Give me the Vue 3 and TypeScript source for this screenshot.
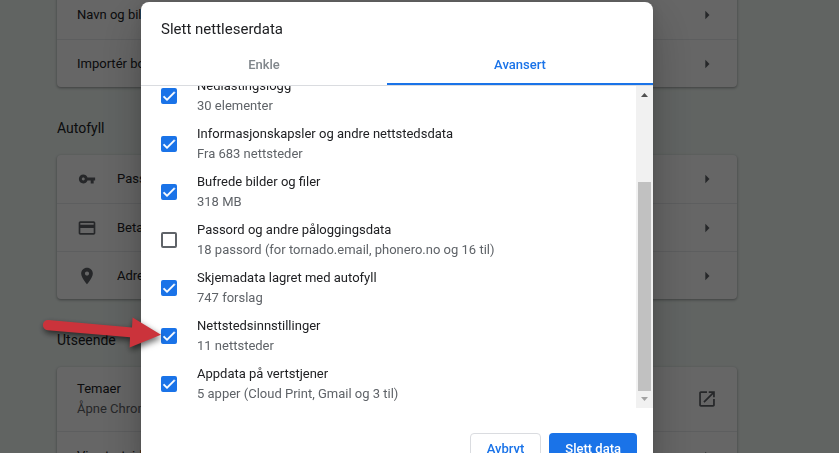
<script setup lang="ts">
import { ref } from 'vue'

interface Row { title: string; sub?: string; icon?: string; viewBox?: string; external?: boolean }
interface Section { heading?: string; rows: Row[] }
interface DataType { title: string; sub: string; checked: boolean }

const keyPath = 'M12.65 10C11.83 7.67 9.61 6 7 6c-3.31 0-6 2.69-6 6s2.69 6 6 6c2.61 0 4.83-1.67 5.65-4H17v4h4v-4h2v-4H12.65zM7 14c-1.1 0-2-.9-2-2s.9-2 2-2 2 .9 2 2-.9 2-2 2z'
const cardPath = 'M20 4H4c-1.11 0-1.99.89-1.99 2L2 18c0 1.11.89 2 2 2h16c1.11 0 2-.89 2-2V6c0-1.11-.89-2-2-2zm0 14H4v-6h16v6zm0-10H4V6h16v2z'
const pinPath = 'M12 2C8.13 2 5 5.13 5 9c0 5.25 7 13 7 13s7-7.75 7-13c0-3.87-3.13-7-7-7zm0 9.5c-1.38 0-2.5-1.12-2.5-2.5s1.12-2.5 2.5-2.5 2.5 1.12 2.5 2.5-1.12 2.5-2.5 2.5z'

const sections: Section[] = [
  { rows: [{ title: 'Navn og bilde' }, { title: 'Importér bokmerker og innstillinger' }] },
  {
    heading: 'Autofyll',
    rows: [
      { title: 'Passord', icon: keyPath, viewBox: '-1.5 -1.5 27 27' },
      { title: 'Betalingsmåter', icon: cardPath },
      { title: 'Adresser og mer', icon: pinPath },
    ],
  },
  {
    heading: 'Utseende',
    rows: [
      { title: 'Temaer', sub: 'Åpne Chrome Nettmarked', external: true },
      { title: 'Vis startsideknappen' },
    ],
  },
]

const tabs = ['Enkle', 'Avansert']
const activeTab = ref('Avansert')

const dataTypes = ref<DataType[]>([
  { title: 'Nedlastingslogg', sub: '30 elementer', checked: true },
  { title: 'Informasjonskapsler og andre nettstedsdata', sub: 'Fra 683 nettsteder', checked: true },
  { title: 'Bufrede bilder og filer', sub: '318 MB', checked: true },
  { title: 'Passord og andre påloggingsdata', sub: '18 passord (for tornado.email, phonero.no og 16 til)', checked: false },
  { title: 'Skjemadata lagret med autofyll', sub: '747 forslag', checked: true },
  { title: 'Nettstedsinnstillinger', sub: '11 nettsteder', checked: true },
  { title: 'Appdata på vertstjener', sub: '5 apper (Cloud Print, Gmail og 3 til)', checked: true },
])
</script>

<template>
  <div class="page">
    <main class="settings">
      <section v-for="(section, i) in sections" :key="i">
        <h2 v-if="section.heading" class="heading">{{ section.heading }}</h2>
        <div class="card">
          <button v-for="row in section.rows" :key="row.title" type="button" class="row" :class="{ tall: row.sub }">
            <svg v-if="row.icon" class="icon" :viewBox="row.viewBox ?? '0 0 24 24'" aria-hidden="true"><path :d="row.icon" /></svg>
            <span class="row-text">
              <span>{{ row.title }}</span>
              <span v-if="row.sub" class="sub">{{ row.sub }}</span>
            </span>
            <svg v-if="row.external" class="icon" viewBox="0.5 0.5 23 23" aria-hidden="true">
              <path d="M19 19H5V5h7V3H5c-1.11 0-2 .9-2 2v14c0 1.1.89 2 2 2h14c1.1 0 2-.9 2-2v-7h-2v7zM14 3v2h3.59l-9.83 9.83 1.41 1.41L19 6.41V10h2V3h-7z" />
            </svg>
            <svg v-else class="icon" viewBox="0 0 24 24" aria-hidden="true"><path d="M10 7l5 5-5 5z" /></svg>
          </button>
        </div>
      </section>
    </main>

    <div class="backdrop">
      <div class="dialog" role="dialog" aria-labelledby="dialog-title">
        <h1 id="dialog-title" class="title">Slett nettleserdata</h1>
        <div class="tabs" role="tablist">
          <button
            v-for="tab in tabs"
            :key="tab"
            type="button"
            role="tab"
            class="tab"
            :class="{ active: tab === activeTab }"
            :aria-selected="tab === activeTab"
            @click="activeTab = tab"
          >{{ tab }}</button>
        </div>
        <div class="body">
          <div class="list">
            <label v-for="(item, i) in dataTypes" :key="item.title" class="item" :for="`type-${i}`">
              <span class="check">
                <input :id="`type-${i}`" v-model="item.checked" type="checkbox" class="box" />
                <svg v-if="item.checked" class="mark" viewBox="0 0 24 24" aria-hidden="true">
                  <path d="M9 16.2L4.8 12l-1.4 1.4L9 19 21 7l-1.4-1.4L9 16.2z" />
                </svg>
              </span>
              <span class="item-text">
                <span>{{ item.title }}</span>
                <span class="sub">{{ item.sub }}</span>
              </span>
            </label>
          </div>
          <div class="scrollbar" aria-hidden="true">
            <svg class="scroll-arrow" viewBox="0 0 17 17"><path d="M5 11h7L8.500 7z" fill="#505050" /></svg>
            <div class="track"><div class="thumb"></div></div>
            <svg class="scroll-arrow" viewBox="0 0 17 17"><path d="M5 6h7L8.500 10z" fill="#a3a3a3" /></svg>
          </div>
        </div>
        <div class="actions">
          <button type="button" class="btn">Avbryt</button>
          <button type="button" class="btn primary">Slett data</button>
        </div>
        <svg class="pointer" viewBox="0 0 130 50" aria-hidden="true">
          <path d="M9.300 10L93 17.600L93.600 7.600L122 24.700L90.600 37.600L91 27.300L8.700 20.200A5.100 5.100 0 0 1 9.300 10Z" />
        </svg>
      </div>
    </div>
  </div>
</template>

<style>
body {
  overflow: hidden;
}
</style>

<style scoped>
.page {
  box-sizing: border-box;
  height: 100vh;
  padding-right: 45px;
  overflow: hidden;
  background: #f3faf6;
  color: #202124;
  font-family: Roboto, "Liberation Sans", sans-serif;
  font-size: 13px;
  line-height: 20px;
}
.page * {
  box-sizing: border-box;
}
button {
  font: inherit;
  color: inherit;
  border: 0;
  background: none;
  padding: 0;
  cursor: pointer;
}
.settings {
  display: flow-root;
  max-width: 680px;
  margin: -9px auto 0;
}
.heading {
  margin: 0;
  padding: 31px 0 17px;
  font-size: 14px;
  font-weight: 400;
  line-height: 20px;
}
.card {
  background: #fff;
  border-radius: 4px;
  box-shadow: 0 1px 2px rgba(60, 64, 67, 0.3), 0 1px 3px 1px rgba(60, 64, 67, 0.15);
}
.row {
  display: flex;
  align-items: center;
  gap: 20px;
  width: 100%;
  height: 48px;
  padding: 0 20px;
  text-align: left;
}
.row.tall {
  height: 64px;
}
.row + .row {
  border-top: 1px solid #e8eaed;
}
.row-text,
.item-text {
  display: flex;
  flex-direction: column;
  flex: 1;
}
.sub {
  color: #5f6368;
}
.icon {
  width: 20px;
  height: 20px;
  fill: #5f6368;
}
.backdrop {
  position: fixed;
  inset: 0;
  padding: 2px 45px 0 0;
  background: rgba(0, 0, 0, 0.6);
}
.dialog {
  position: relative;
  max-width: 512px;
  margin: 0 auto;
  background: #fff;
  border-radius: 8px;
  box-shadow: 0 0 16px rgba(0, 0, 0, 0.12), 0 16px 48px rgba(0, 0, 0, 0.24);
}
.title {
  margin: 0;
  padding: 17px 20px 5px;
  font-size: 15px;
  font-weight: 400;
  line-height: 20px;
}
.tabs {
  display: flex;
  border-bottom: 1px solid #dadce0;
}
.tab {
  flex: 246;
  height: 41px;
  padding-top: 2px;
  border-bottom: 2px solid transparent;
  font-weight: 500;
  color: #80868b;
}
.tab.active {
  flex: 266;
  border-color: #1a73e8;
  color: #1a73e8;
}
.body {
  display: flex;
  height: calc(100vh - 131px);
}
.list {
  display: flex;
  flex: 1;
  flex-direction: column;
  justify-content: flex-end;
  overflow: hidden;
}
.item {
  display: flex;
  flex: none;
  align-items: center;
  gap: 20px;
  height: 48px;
  padding: 0 20px;
}
.check {
  display: grid;
  width: 16px;
  height: 16px;
}
.box {
  grid-area: 1 / 1;
  width: 16px;
  height: 16px;
  margin: 0;
  appearance: none;
  border: 2px solid #5f6368;
  border-radius: 2px;
}
.box:checked {
  border-color: #1a73e8;
  background: #1a73e8;
}
.mark {
  grid-area: 1 / 1;
  z-index: 1;
  width: 16px;
  height: 16px;
  fill: #fff;
  stroke: #fff;
  stroke-width: 1;
  pointer-events: none;
}
.scrollbar {
  display: flex;
  flex-direction: column;
  width: 17px;
  background: #f1f1f1;
}
.scroll-arrow {
  width: 17px;
  height: 17px;
}
.track {
  display: flex;
  flex: 1;
  flex-direction: column;
  justify-content: flex-end;
  padding: 0 2px;
}
.thumb {
  height: 72.5%;
  background: #c1c1c1;
}
.actions {
  display: flex;
  justify-content: flex-end;
  gap: 8px;
  padding: 25px 16px 16px;
}
.btn {
  height: 32px;
  padding: 0 16px;
  border: 1px solid #dadce0;
  border-radius: 4px;
  font-weight: 500;
  color: #1a73e8;
}
.btn.primary {
  border: 0;
  background: #1a73e8;
  color: #fff;
}
.pointer {
  position: absolute;
  top: 308px;
  left: -102px;
  width: 130px;
  height: 50px;
  fill: #cb333b;
  filter: drop-shadow(1px 3px 3px rgba(0, 0, 0, 0.6));
  pointer-events: none;
}
</style>
